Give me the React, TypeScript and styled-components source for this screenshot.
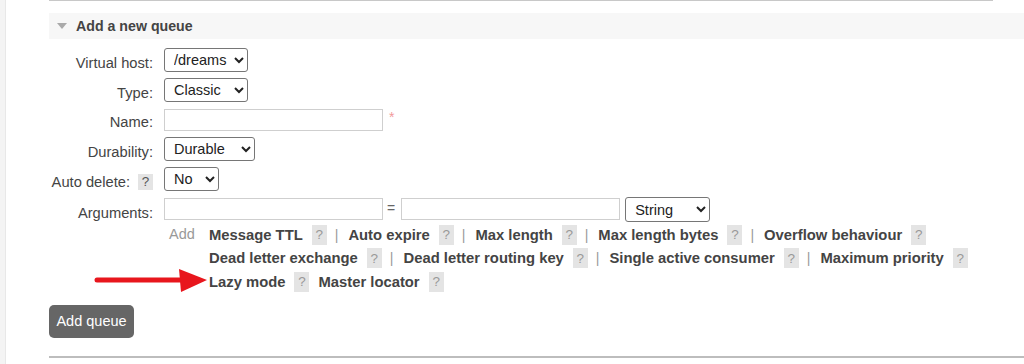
import styled, { createGlobalStyle } from "styled-components";

const GlobalStyle = createGlobalStyle`
  html, body {
    margin: 0;
    padding: 0;
    background: #fff;
  }
  body {
    font-family: "Liberation Sans", Arial, sans-serif;
    font-size: 14px;
    color: #484848;
    overflow: hidden;
  }
`

const Page = styled.div`
  position: relative;
  display: flex;
  height: 364px;
`

const SideEdge = styled.div`
  flex: none;
  width: 5px;
  background: #f4f4f4;
  border-right: 1px solid #e8e8e8;
`

const Main = styled.main`
  flex: 1;
  min-width: 0;
  padding-left: 43px;
`

const TopRule = styled.div`
  width: 944px;
  height: 1px;
  background: #c8c8c8;
`

const SectionHeader = styled.div`
  display: flex;
  align-items: center;
  height: 26px;
  margin-top: 12px;
  padding-left: 8px;
  background: #f7f7f7;
`

const Toggle = styled.span`
  width: 0;
  height: 0;
  margin-right: 9px;
  border-left: 5px solid transparent;
  border-right: 5px solid transparent;
  border-top: 6px solid #aaa;
`

const Title = styled.h2`
  margin: 0;
  font-size: 14.2px;
  font-weight: bold;
  color: #444;
`

const Form = styled.div`
  display: grid;
  grid-template-columns: 104px 1fr;
  column-gap: 11px;
  row-gap: 6px;
  margin-top: 9px;
`

const Label = styled.label`
  align-self: end;
  display: flex;
  justify-content: flex-end;
  align-items: flex-end;
  gap: 8px;
  padding-bottom: 1px;
  line-height: 16px;
  font-size: 14.7px;
  color: #444;
  white-space: nowrap;
`

const Field = styled.div`
  display: flex;
  align-items: flex-start;
`

const Select = styled.select<{ $w: number; $h?: number }>`
  width: ${(p) => p.$w}px;
  height: ${(p) => p.$h ?? 24}px;
  padding: 0 2px 0 5px;
  font-family: "Liberation Sans", Arial, sans-serif;
  font-size: 14.5px;
  color: #222;
  background: #fff;
  border: 1px solid #767676;
  border-radius: 3px;
`

const TextInput = styled.input`
  box-sizing: border-box;
  width: 219px;
  height: 22px;
  margin: 1px 0 0;
  padding: 0 4px;
  font-family: "Liberation Sans", Arial, sans-serif;
  font-size: 14px;
  border: 1px solid #cfcfcf;
  border-radius: 0;
  outline: none;
`

const Mandatory = styled.span`
  margin: 2px 0 0 6px;
  color: #f29a9a;
  font-size: 14px;
  line-height: 14px;
`

const Equals = styled.span`
  margin: 0 6px 0 4px;
  line-height: 22px;
  color: #666;
`

const Help = styled.span<{ $tall?: boolean }>`
  display: inline-flex;
  align-items: center;
  justify-content: center;
  flex: none;
  width: 15px;
  height: ${(p) => (p.$tall ? 20 : 16)}px;
  background: #e4e4e4;
  color: ${(p) => (p.$tall ? "#999" : "#555")};
  font-size: 13.5px;
  font-weight: normal;
`

const ArgHelp = styled.div`
  display: flex;
  align-items: flex-start;
  padding-left: 115px;
  margin-top: 1px;
`

const AddHint = styled.span`
  flex: none;
  width: 40px;
  padding-left: 5px;
  line-height: 23.5px;
  color: #999;
  font-size: 14.5px;
`

const Lines = styled.div`
  display: flex;
  flex-direction: column;
`

const Line = styled.div`
  display: flex;
  align-items: center;
  height: 23.5px;
  white-space: nowrap;
`

const ArgLink = styled.a`
  margin-right: 9px;
  font-size: 14.8px;
  font-weight: bold;
  color: #444;
  text-decoration: none;
`

const Sep = styled.span`
  margin: 0 10px 0 8px;
  color: #999;
`

const Gap = styled.span`
  width: 9px;
`

const SubmitButton = styled.button`
  display: block;
  width: 85px;
  height: 33px;
  margin-top: 11px;
  padding: 0;
  font-family: "Liberation Sans", Arial, sans-serif;
  font-size: 14.5px;
  color: #fff;
  background: #666;
  border: none;
  border-radius: 5px;
`

const BottomRule = styled.div`
  height: 2px;
  margin-top: 18px;
  background: #bdbdbd;
`

const Arrow = styled.svg`
  position: absolute;
  left: 93px;
  top: 267px;
`

const argLines: string[][] = [
  ["Message TTL", "Auto expire", "Max length", "Max length bytes", "Overflow behaviour"],
  ["Dead letter exchange", "Dead letter routing key", "Single active consumer", "Maximum priority"],
]

const App = () => {
  return (
    <Page>
      <GlobalStyle />
      <SideEdge />
      <Main>
        <TopRule />
        <SectionHeader>
          <Toggle />
          <Title>Add a new queue</Title>
        </SectionHeader>

        <Form>
          <Label>Virtual host:</Label>
          <Field>
            <Select $w={84} defaultValue="/dreams">
              <option>/dreams</option>
            </Select>
          </Field>

          <Label>Type:</Label>
          <Field>
            <Select $w={84} defaultValue="Classic">
              <option>Classic</option>
              <option>Quorum</option>
            </Select>
          </Field>

          <Label>Name:</Label>
          <Field>
            <TextInput />
            <Mandatory>*</Mandatory>
          </Field>

          <Label>Durability:</Label>
          <Field>
            <Select $w={91} defaultValue="Durable">
              <option>Durable</option>
              <option>Transient</option>
            </Select>
          </Field>

          <Label>
            Auto delete: <Help>?</Help>
          </Label>
          <Field>
            <Select $w={55} defaultValue="No">
              <option>No</option>
              <option>Yes</option>
            </Select>
          </Field>

          <Label>Arguments:</Label>
          <Field>
            <TextInput />
            <Equals>=</Equals>
            <TextInput />
            <Select $w={85} $h={25} defaultValue="String" style={{ marginLeft: 5 }}>
              <option>String</option>
              <option>Number</option>
              <option>Boolean</option>
              <option>List</option>
            </Select>
          </Field>
        </Form>

        <ArgHelp>
          <AddHint>Add</AddHint>
          <Lines>
            {argLines.map((line, i) => (
              <Line key={i}>
                {line.map((name, j) => (
                  <span key={name} style={{ display: "contents" }}>
                    <ArgLink href="#">{name}</ArgLink>
                    <Help $tall>?</Help>
                    {j < line.length - 1 && <Sep>|</Sep>}
                  </span>
                ))}
              </Line>
            ))}
            <Line>
              <ArgLink href="#">Lazy mode</ArgLink>
              <Help $tall>?</Help>
              <Gap />
              <ArgLink href="#">Master locator</ArgLink>
              <Help $tall>?</Help>
            </Line>
          </Lines>
        </ArgHelp>

        <SubmitButton>Add queue</SubmitButton>
        <BottomRule />
      </Main>

      <Arrow width="118" height="28" viewBox="0 0 118 28">
        <line x1="4" y1="13" x2="92" y2="13" stroke="#e8161d" strokeWidth="5" strokeLinecap="round" />
        <polygon points="86,2 114,13 88,25" fill="#e8161d" />
      </Arrow>
    </Page>
  )
}

export default App;
